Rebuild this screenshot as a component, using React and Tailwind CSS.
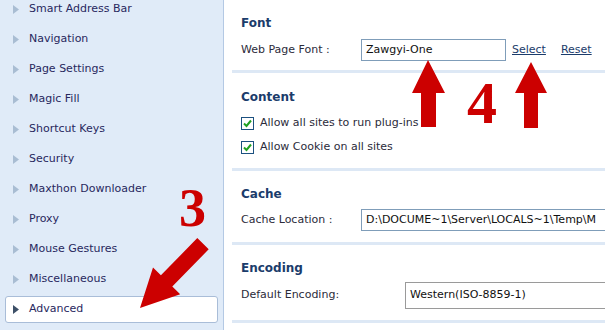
const menu = [
  "Smart Address Bar",
  "Navigation",
  "Page Settings",
  "Magic Fill",
  "Shortcut Keys",
  "Security",
  "Maxthon Downloader",
  "Proxy",
  "Mouse Gestures",
  "Miscellaneous",
  "Advanced",
];

function Tri({ dark }) {
  return (
    <svg width="6" height="9" viewBox="0 0 6 9" className="shrink-0">
      <path d="M0 0 L6 4.5 L0 9 Z" fill={dark ? "#3d5068" : "#a9bdd3"} />
    </svg>
  );
}

function Check() {
  return (
    <span className="w-[13px] h-[13px] border border-[#1c5180] bg-white flex items-center justify-center shrink-0">
      <svg width="9" height="9" viewBox="0 0 9 9">
        <path d="M1 4.5 L3.5 7 L8 1.5" stroke="#21a121" strokeWidth="2" fill="none" />
      </svg>
    </span>
  );
}

function Section({ title, children, className }) {
  return (
    <div className={className}>
      <div className="pl-[9px] h-4 leading-4 font-bold text-[12px] text-[#1b3c6b]">{title}</div>
      {children}
    </div>
  );
}

function Sep() {
  return <div className="h-[3px] bg-[#dde8f5]" />;
}

export default function App() {
  return (
    <div
      className="relative w-[605px] h-[330px] overflow-hidden flex bg-white text-[11px] text-[#2b2b3a]"
      style={{ fontFamily: '"DejaVu Sans", sans-serif' }}
    >
      {/* sidebar */}
      <div className="w-[224px] shrink-0 bg-[#e0ebf8] border-r border-[#b4c9e4]">
        <div className="-mt-[6px] flex flex-col">
          {menu.map((m) => {
            const sel = m === "Advanced";
            return (
              <div key={m} className="h-[30px] flex items-center px-[5px]">
                <div
                  className={
                    "flex-1 h-[27px] flex items-center gap-[10px] pl-[7px] rounded-[3px] border " +
                    (sel ? "bg-white border-[#a9bdd8]" : "border-transparent")
                  }
                >
                  <Tri dark={sel} />
                  <span className="text-[#28285e]">{m}</span>
                </div>
              </div>
            );
          })}
        </div>
      </div>

      {/* main */}
      <div className="flex-1 pl-[8px] min-w-0">
        <Section title="Font" className="pt-[15px] pb-[9px]">
          <div className="flex items-center mt-[8px] h-[22px] pl-[9px]">
            <span className="w-[120px]">Web Page Font :</span>
            <div className="w-[145px] h-[22px] border border-[#7f9db9] flex items-center pl-[4px] text-[#111]">
              Zawgyi-One
            </div>
            <span className="ml-[6px] underline text-[#1b3c6b]">Select</span>
            <span className="ml-[15px] underline text-[#1b3c6b]">Reset</span>
          </div>
        </Section>
        <Sep />
        <Section title="Content" className="pt-[16px] pb-[9px]">
          <div className="mt-[6px] pl-[9px]">
            <div className="h-6 flex items-center gap-[6px]">
              <Check />
              <span>Allow all sites to run plug-ins</span>
            </div>
            <div className="h-6 flex items-center gap-[6px]">
              <Check />
              <span>Allow Cookie on all sites</span>
            </div>
          </div>
        </Section>
        <Sep />
        <Section title="Cache" className="pt-[15px] pb-[11px]">
          <div className="flex items-center mt-[7px] h-[22px] pl-[9px]">
            <span className="w-[120px] shrink-0">Cache Location :</span>
            <div className="w-[300px] shrink-0 h-[22px] border border-[#7f9db9] flex items-center pl-[4px] text-[#111] whitespace-nowrap overflow-hidden">
              D:\DOCUME~1\Server\LOCALS~1\Temp\M
            </div>
          </div>
        </Section>
        <Sep />
        <Section title="Encoding" className="pt-[15px] pb-[11px]">
          <div className="flex items-center mt-[6px] h-[27px] pl-[9px]">
            <span className="w-[164px] shrink-0">Default Encoding:</span>
            <div className="w-[300px] shrink-0 h-[27px] border border-[#9a9a9a] flex items-center pl-[4px] text-[#111]">
              Western(ISO-8859-1)
            </div>
          </div>
        </Section>
        <Sep />
      </div>

      {/* annotations */}
      <svg className="absolute inset-0 pointer-events-none" width="605" height="330">
        <polygon
          points="140,308 153,267.6 160.9,275.3 197.3,238.1 208.7,249.3 172.3,286.5 180.2,294.2"
          fill="#cc0000"
        />
        <polygon points="428,60 445,93 436,93 436,127 421,127 421,93 412,93" fill="#cc0000" />
        <polygon points="531,62 547,93 538,93 538,128 524,128 524,93 515,93" fill="#cc0000" />
      </svg>
      <div
        className="absolute left-[179px] top-[181px] text-[54px] leading-none font-bold text-[#cc0000]"
        style={{ fontFamily: '"Liberation Serif", serif' }}
      >
        3
      </div>
      <div
        className="absolute left-[467px] top-[73px] text-[60px] leading-none font-bold text-[#cc0000]"
        style={{ fontFamily: '"Liberation Serif", serif' }}
      >
        4
      </div>
    </div>
  );
}
